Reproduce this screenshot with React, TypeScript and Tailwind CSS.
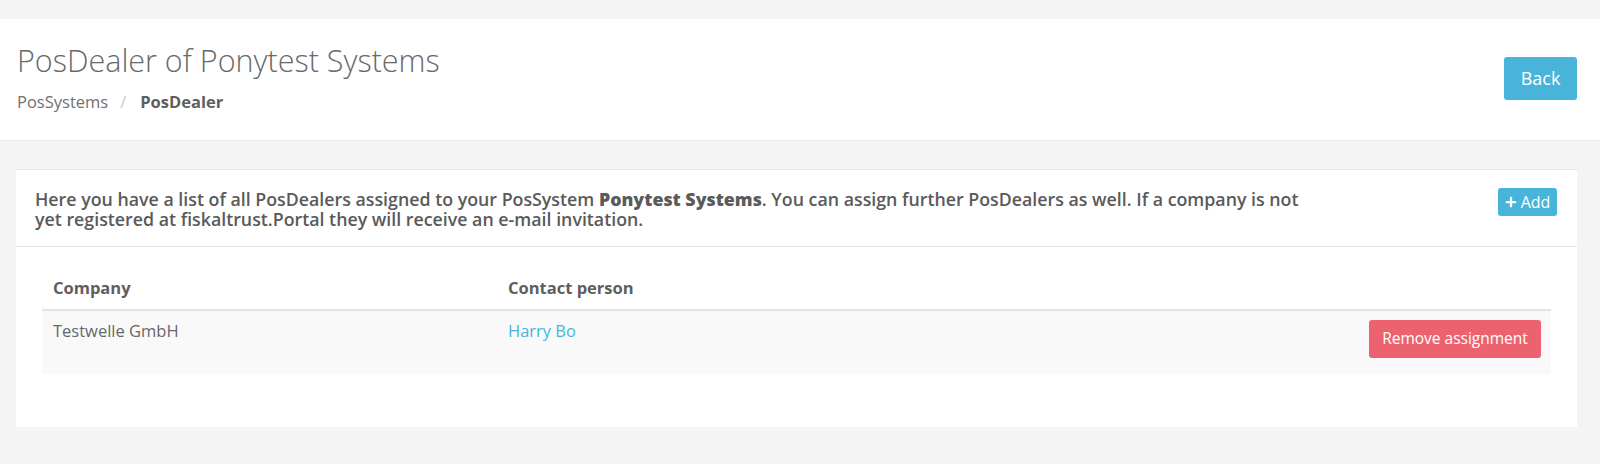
import { FaPlus } from "react-icons/fa"

type Assignment = {
    company: string
    contact: string
}

const assignments: Assignment[] = [
    { company: "Testwelle GmbH", contact: "Harry Bo" },
]

const PageHeader = () => {
    return (
        <div className="bg-white border-b border-[#e7e7e7] flex justify-between items-start pl-[17px] pr-[23px] pt-[25px] pb-[26px]">
            <div>
                <h1 className="text-[30.5px] leading-[33px] font-light text-[#676a6c]">PosDealer of Ponytest Systems</h1>
                <div className="mt-[13px] text-[16.5px] leading-6 text-[#707070] flex">
                    <span>PosSystems</span>
                    <span className="px-[12px] text-[#c8c8c8]">/</span>
                    <span className="font-bold text-[#5e5e5e] pl-[2px]">PosDealer</span>
                </div>
            </div>
            <button className="mt-[13px] w-[73px] h-[43px] rounded-[3px] bg-[#49b4d9] text-white text-[18px]">
                Back
            </button>
        </div>
    )
}

const AssignmentTable = () => {
    return (
        <div className="mx-[26px] mt-[20px]">
            <div className="grid grid-cols-[455px_1fr_auto] border-b-2 border-[#e3e3e3] text-[16.5px] font-bold text-[#5e5e5e] h-[44px] items-center">
                <div className="pl-[11px]">Company</div>
                <div className="pl-[11px]">Contact person</div>
                <div />
            </div>
            {assignments.map((a) => (
                <div key={a.company} className="grid grid-cols-[455px_1fr_auto] bg-[#f9f9f9] h-[63px] text-[16.5px] text-[#676767]">
                    <div className="pl-[11px] pt-[8px]">{a.company}</div>
                    <div className="pl-[11px] pt-[8px] text-[#49b4d9]">{a.contact}</div>
                    <div className="pt-[9px] pr-[10px]">
                        <button className="w-[172px] h-[38px] rounded-[3px] bg-[#ec636f] text-white text-[15.5px]">
                            Remove assignment
                        </button>
                    </div>
                </div>
            ))}
        </div>
    )
}

export default function App() {
    return (
        <div className="min-h-[464px] bg-[#f4f4f4] pt-[19px] font-['Open_Sans',sans-serif]">
            <PageHeader />
            <div className="pl-4 pr-[23px] pt-[28px]">
                <div className="bg-white border-t border-[#e3e3e3] h-[258px]">
                    <div className="flex justify-between items-start pl-[19px] pr-[20px] pt-[19px] border-b border-[#e6e6e6] h-[77px]">
                        <p className="max-w-[1285px] text-[17.8px] leading-[20px] font-semibold text-[#5a5a5a]">
                            Here you have a list of all PosDealers assigned to your PosSystem <span className="font-extrabold">Ponytest Systems</span>. You can assign further PosDealers as well. If a company is not yet registered at fiskaltrust.Portal they will receive an e-mail invitation.
                        </p>
                        <button className="flex items-center gap-[4px] w-[59px] h-[28px] justify-center rounded-[3px] bg-[#49b4d9] text-white text-[16px] -mt-[1px] shrink-0">
                            <FaPlus className="text-[12px]" />
                            Add
                        </button>
                    </div>
                    <AssignmentTable />
                </div>
            </div>
        </div>
    )
}
